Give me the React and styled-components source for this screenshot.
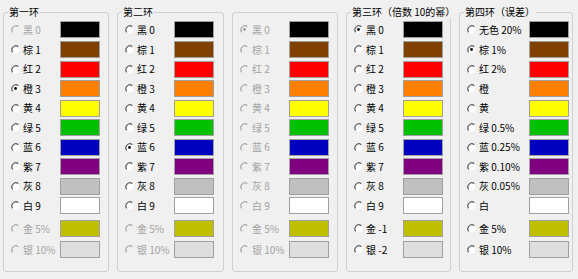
import React from "react";
import styled, { createGlobalStyle } from "styled-components";

const Global = createGlobalStyle`
  html, body { margin: 0; padding: 0; background: #f0f0f0; }
  body { font-family: "Noto Sans CJK SC", "Noto Sans", sans-serif; }
`;

const Page = styled.div`
  display: flex;
  align-items: flex-start;
  gap: 8px;
  padding: 12px 0 0 3px;
  width: 578px;
  height: 279px;
  box-sizing: border-box;
  background: #f0f0f0;
`;

const Group = styled.div`
  box-sizing: border-box;
  width: ${(p) => p.$w}px;
  height: 260px;
  border: 1px solid #d0d0d0;
  border-radius: 3px;
  display: flex;
  flex-direction: column;
`;

const Title = styled.div`
  align-self: flex-start;
  margin: -7px 0 0 4px;
  padding: 0 1px;
  height: 12px;
  line-height: 12px;
  font-size: 10px;
  color: #000;
  white-space: nowrap;
  background: ${(p) => (p.$empty ? "transparent" : "#f0f0f0")};
`;

const Rows = styled.div`
  display: flex;
  flex-direction: column;
  margin-top: 2.2px;
`;

const Row = styled.div`
  display: grid;
  grid-template-columns: 9px ${(p) => p.$labelW}px 40px;
  column-gap: 3px;
  align-items: center;
  padding-left: 7px;
  height: ${(p) => (p.$metal ? 21 : 19.56)}px;
  margin-top: ${(p) => (p.$first ? 2.7 : 0)}px;
`;

const Label = styled.span`
  font-size: 10px;
  line-height: 12px;
  white-space: nowrap;
  color: ${(p) => (p.$disabled ? "#a3a3a3" : "#000")};
`;

const Swatch = styled.div`
  box-sizing: border-box;
  width: 40px;
  height: 17px;
  border: 1px solid #a0a0a0;
  background: ${(p) => p.$c};
`;

const RadioSvg = styled.svg`
  display: block;
  width: 9px;
  height: 9px;
`;

function Radio({ checked, disabled }) {
  const stroke = disabled ? "#a8a8a8" : "#5a5a5a";
  const fill = disabled ? "#f0f0f0" : "#ffffff";
  const dot = disabled ? "#a0a0a0" : "#000";
  return (
    <RadioSvg viewBox="0 0 9 9">
      <circle cx="4.5" cy="4.5" r="4" fill={fill} />
      <path
        d="M1.7 7.3 A4 4 0 0 1 7.3 1.7"
        fill="none"
        stroke={stroke}
        strokeWidth="1.2"
      />
      {checked && <circle cx="4.5" cy="4.5" r="1.4" fill={dot} />}
    </RadioSvg>
  );
}

const COLORS = [
  "#000000",
  "#804000",
  "#ff0000",
  "#ff8000",
  "#ffff00",
  "#00c000",
  "#0000c0",
  "#800080",
  "#c0c0c0",
  "#ffffff",
  "#c0c000",
  "#dedede",
];

const DIGITS = ["黑 0", "棕 1", "红 2", "橙 3", "黄 4", "绿 5", "蓝 6", "紫 7", "灰 8", "白 9"];

const groups = [
  {
    title: "第一环",
    w: 106,
    labelW: 34,
    checked: 3,
    labels: [...DIGITS, "金 5%", "银 10%"],
    disabled: [0, 10, 11],
  },
  {
    title: "第二环",
    w: 107,
    labelW: 34,
    checked: 6,
    labels: [...DIGITS, "金 5%", "银 10%"],
    disabled: [10, 11],
  },
  {
    title: "",
    w: 106,
    labelW: 34,
    checked: 0,
    labels: [...DIGITS, "金 5%", "银 10%"],
    disabled: [0, 1, 2, 3, 4, 5, 6, 7, 8, 9, 10, 11],
  },
  {
    title: "第三环（倍数 10的幂）",
    w: 105,
    labelW: 34,
    checked: 0,
    labels: [...DIGITS, "金 -1", "银 -2"],
    disabled: [],
  },
  {
    title: "第四环（误差）",
    w: 114,
    labelW: 47,
    checked: 1,
    labels: [
      "无色 20%",
      "棕 1%",
      "红 2%",
      "橙",
      "黄",
      "绿 0.5%",
      "蓝 0.25%",
      "紫 0.10%",
      "灰 0.05%",
      "白",
      "金 5%",
      "银 10%",
    ],
    disabled: [],
  },
];

export default function App() {
  return (
    <>
      <Global />
      <Page>
        {groups.map((g, gi) => (
          <Group key={gi} $w={g.w}>
            <Title $empty={!g.title}>{g.title}</Title>
            <Rows>
              {g.labels.map((lab, i) => {
                const dis = g.disabled.includes(i);
                return (
                  <Row
                    key={i}
                    $labelW={g.labelW}
                    $metal={i >= 10}
                    $first={i === 10}
                  >
                    <Radio checked={g.checked === i} disabled={dis} />
                    <Label $disabled={dis}>{lab}</Label>
                    <Swatch $c={COLORS[i]} />
                  </Row>
                );
              })}
            </Rows>
          </Group>
        ))}
      </Page>
    </>
  );
}
